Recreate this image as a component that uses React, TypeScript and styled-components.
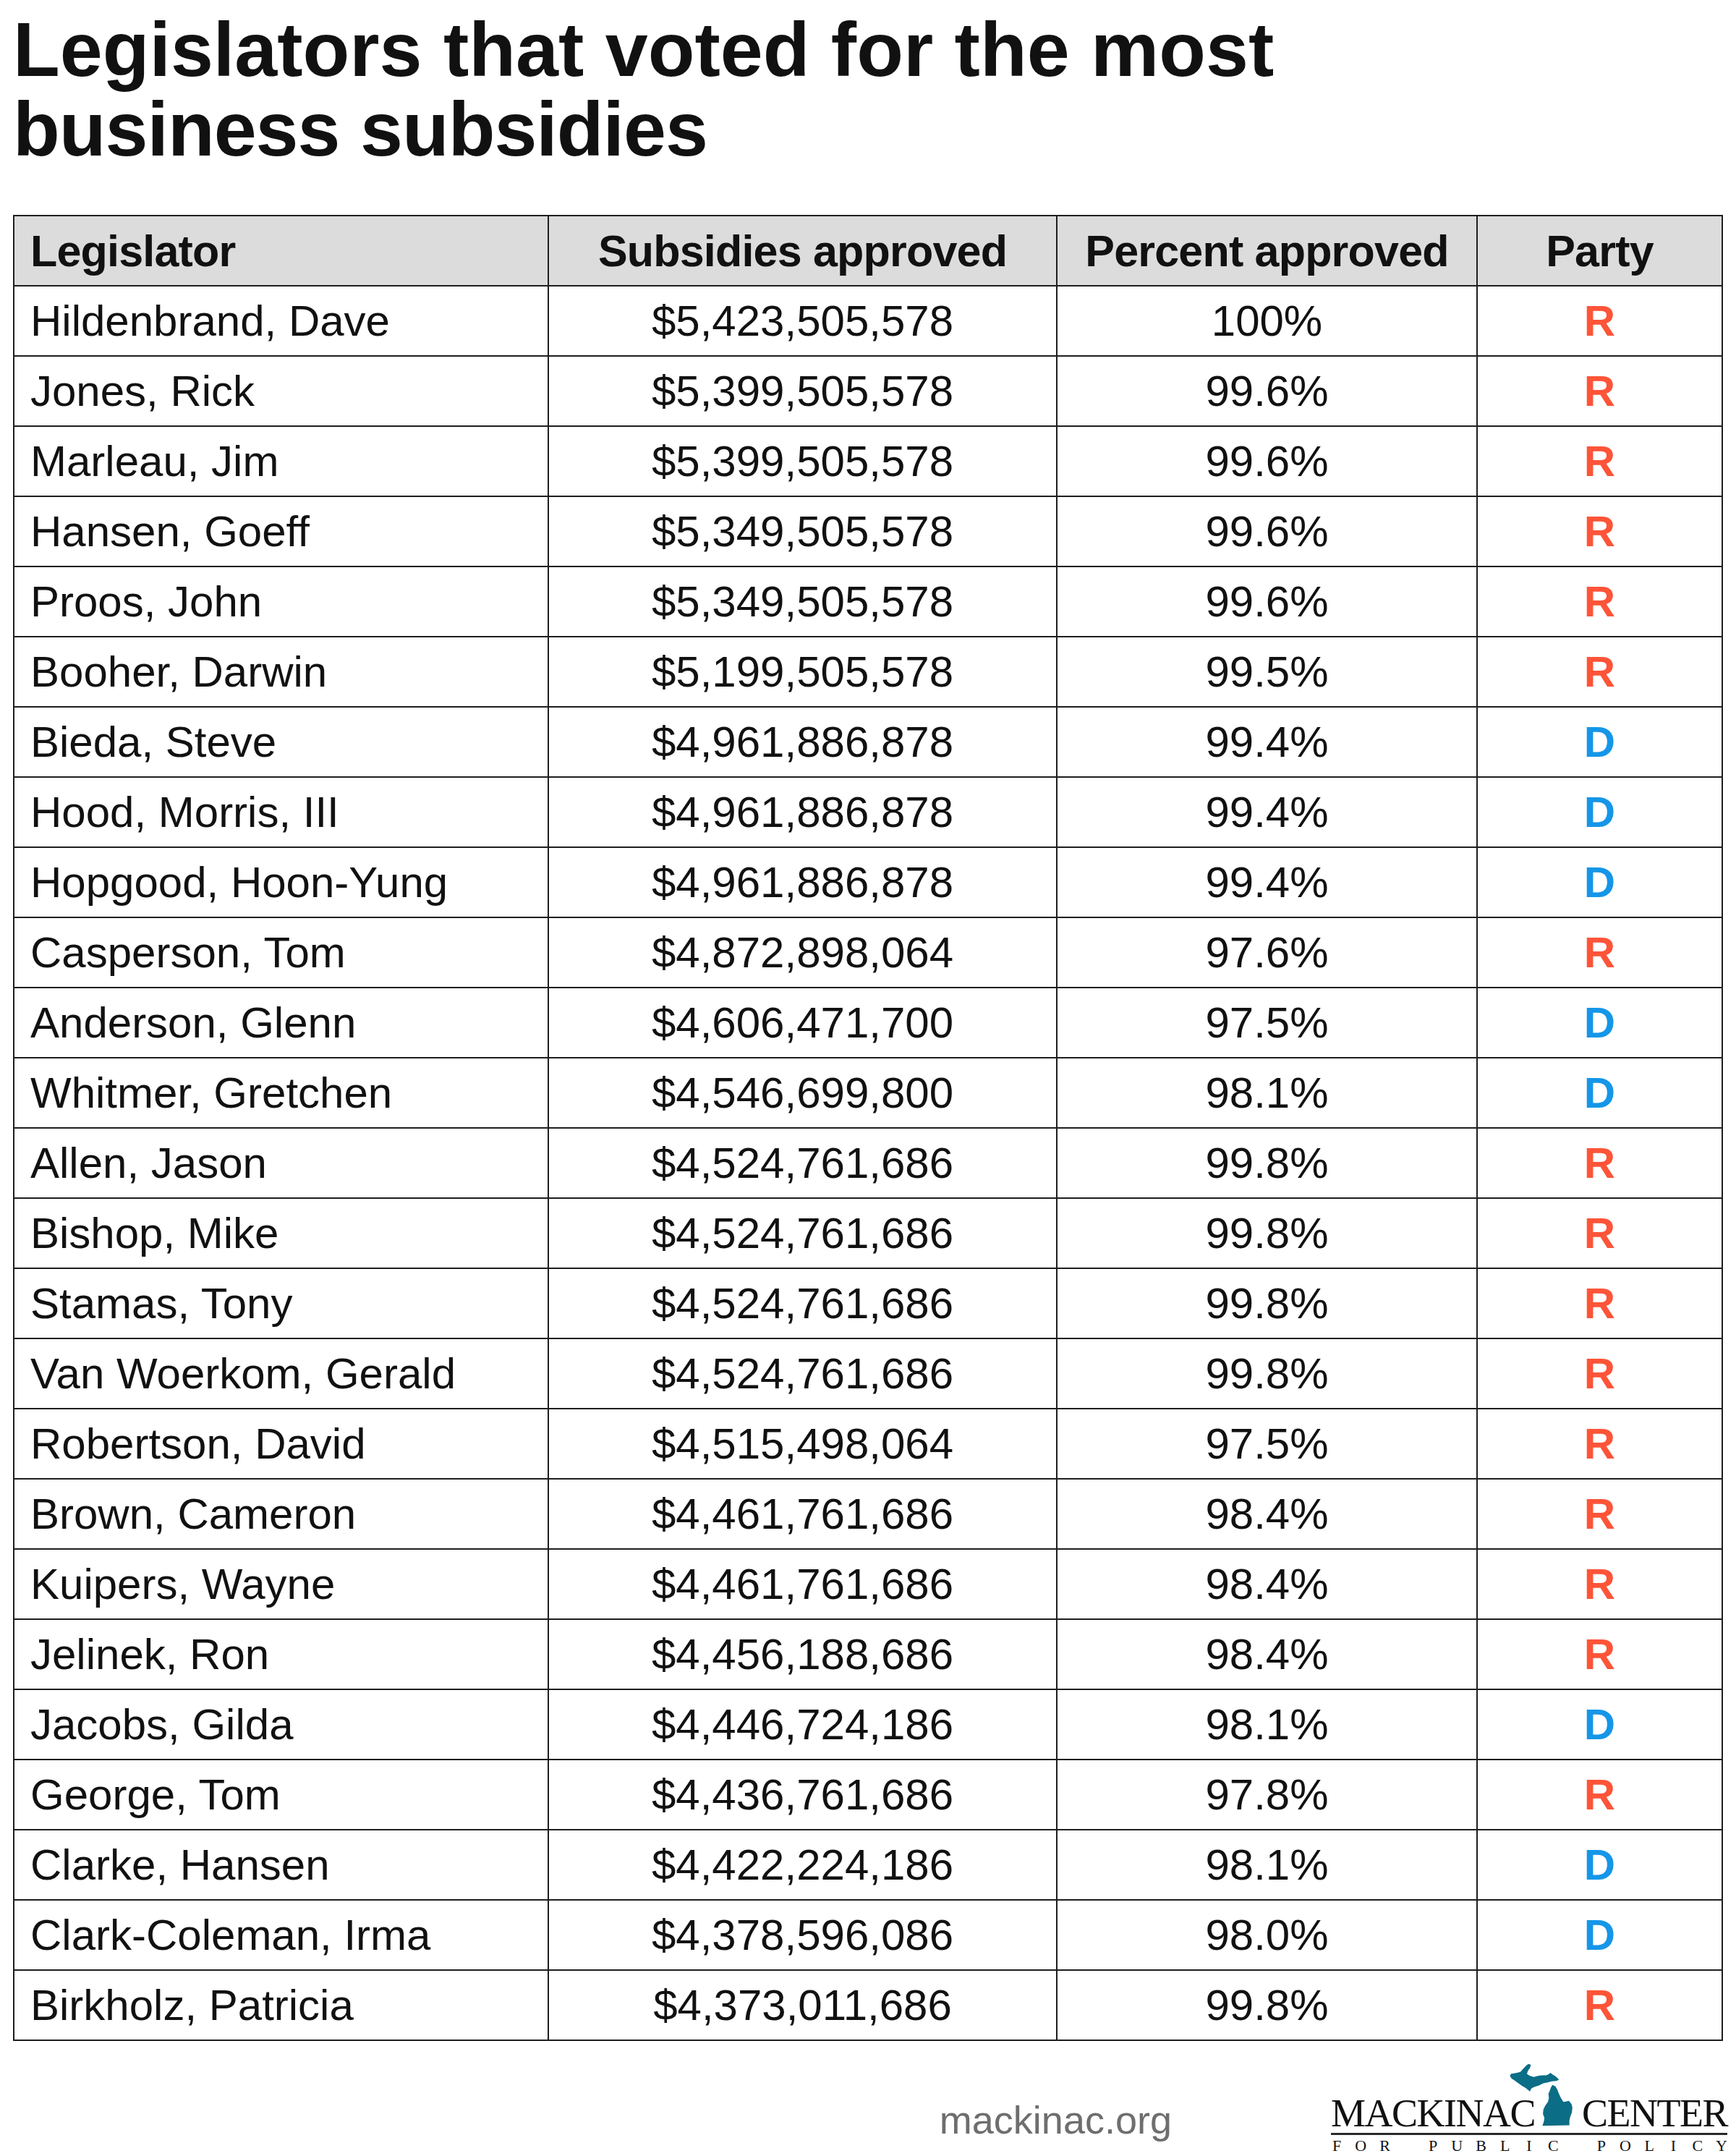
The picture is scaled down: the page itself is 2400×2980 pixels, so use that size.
import React from "react";
import styled, { createGlobalStyle } from "styled-components";

const GlobalStyle = createGlobalStyle`
  html, body { margin: 0; padding: 0; background: #ffffff; }
  body { font-family: "Liberation Sans", Arial, sans-serif; color: #111111; }
`;

const Page = styled.div`
  width: 2400px;
  box-sizing: border-box;
  padding: 13px 18px 0;
`;

const Title = styled.h1`
  margin: 0;
  font-family: "Liberation Sans", Arial, sans-serif;
  font-weight: 700;
  font-size: 106px;
  line-height: 110px;
  color: #111111;
`;

const TitleLine = styled.span<{ $tracking: number }>`
  display: block;
  letter-spacing: ${(p) => p.$tracking}px;
`;

const Grid = styled.div`
  margin-top: 64px;
  display: grid;
  grid-template-columns: 737px 701px 579px 337px;
  grid-auto-rows: 95px;
  gap: 2px;
  padding: 2px;
  background: #1e1e1e;
`;

type Align = "left" | "center";

const Cell = styled.div<{ $align: Align; $head?: boolean }>`
  display: flex;
  align-items: center;
  justify-content: ${(p) => (p.$align === "left" ? "flex-start" : "center")};
  padding: 0 22px;
  background: ${(p) => (p.$head ? "#dcdcdc" : "#ffffff")};
  font-size: ${(p) => (p.$head ? "61px" : "60px")};
  font-weight: ${(p) => (p.$head ? 700 : 400)};
  letter-spacing: ${(p) => (p.$head ? "-0.8px" : "0")};
  color: #111111;
  white-space: nowrap;
`;

const PartyMark = styled.span<{ $party: "R" | "D" }>`
  font-weight: 700;
  font-size: 60px;
  color: ${(p) => (p.$party === "R" ? "#fe5438" : "#1596e8")};
`;

const Footer = styled.div`
  margin-top: 31px;
  display: flex;
  justify-content: flex-end;
  align-items: flex-start;
`;

const Site = styled.div`
  margin-top: 51px;
  margin-right: 220px;
  font-family: "Liberation Sans", Arial, sans-serif;
  font-size: 54px;
  line-height: 1;
  color: #6e6e6e;
`;

const Logo = styled.div`
  width: 548px;
  margin-right: -6px;
  display: flex;
  flex-direction: column;
`;

const LogoTop = styled.div`
  display: flex;
  align-items: baseline;
`;

const LogoWord = styled.span<{ $push?: boolean }>`
  font-family: "Liberation Serif", "Times New Roman", serif;
  font-size: 54px;
  line-height: 1;
  letter-spacing: -1.5px;
  color: #111111;
  margin-left: ${(p) => (p.$push ? "auto" : "0")};
`;

const MichiganSvg = styled.svg`
  width: 90px;
  height: 87px;
  margin-left: -36px;
  flex: none;
`;

const Rule = styled.div`
  height: 3px;
  background: #2a2a2a;
`;

const Tagline = styled.div`
  margin-top: 4px;
  display: flex;
  justify-content: space-between;
  font-family: "Liberation Serif", "Times New Roman", serif;
  font-size: 22px;
  line-height: 22px;
  color: #111111;
`;

const TagLetter = styled.span`
  display: inline-block;
  width: 16px;
  text-align: center;
`;

type Row = [string, string, string, "R" | "D"];

const rows: Row[] = [
  ["Hildenbrand, Dave", "$5,423,505,578", "100%", "R"],
  ["Jones, Rick", "$5,399,505,578", "99.6%", "R"],
  ["Marleau, Jim", "$5,399,505,578", "99.6%", "R"],
  ["Hansen, Goeff", "$5,349,505,578", "99.6%", "R"],
  ["Proos, John", "$5,349,505,578", "99.6%", "R"],
  ["Booher, Darwin", "$5,199,505,578", "99.5%", "R"],
  ["Bieda, Steve", "$4,961,886,878", "99.4%", "D"],
  ["Hood, Morris, III", "$4,961,886,878", "99.4%", "D"],
  ["Hopgood, Hoon-Yung", "$4,961,886,878", "99.4%", "D"],
  ["Casperson, Tom", "$4,872,898,064", "97.6%", "R"],
  ["Anderson, Glenn", "$4,606,471,700", "97.5%", "D"],
  ["Whitmer, Gretchen", "$4,546,699,800", "98.1%", "D"],
  ["Allen, Jason", "$4,524,761,686", "99.8%", "R"],
  ["Bishop, Mike", "$4,524,761,686", "99.8%", "R"],
  ["Stamas, Tony", "$4,524,761,686", "99.8%", "R"],
  ["Van Woerkom, Gerald", "$4,524,761,686", "99.8%", "R"],
  ["Robertson, David", "$4,515,498,064", "97.5%", "R"],
  ["Brown, Cameron", "$4,461,761,686", "98.4%", "R"],
  ["Kuipers, Wayne", "$4,461,761,686", "98.4%", "R"],
  ["Jelinek, Ron", "$4,456,188,686", "98.4%", "R"],
  ["Jacobs, Gilda", "$4,446,724,186", "98.1%", "D"],
  ["George, Tom", "$4,436,761,686", "97.8%", "R"],
  ["Clarke, Hansen", "$4,422,224,186", "98.1%", "D"],
  ["Clark-Coleman, Irma", "$4,378,596,086", "98.0%", "D"],
  ["Birkholz, Patricia", "$4,373,011,686", "99.8%", "R"],
];

const tagline = "FOR PUBLIC POLICY".split("");

const Michigan = () => (
  <MichiganSvg viewBox="80 30 260 252" aria-hidden="true">
    <path
      fill="#0b6d86"
      d="M88,72 L112,68 L126,64 L138,50 L150,38 L158,32 L168,36 L164,48 L156,60 L152,72 L164,80 L180,84 L196,80 L212,78 L228,78 L238,74 L246,68 L254,74 L264,80 L274,88 L280,96 L270,100 L252,102 L236,106 L218,110 L200,118 L182,124 L170,130 L164,142 L156,136 L146,128 L132,120 L116,108 L102,98 L90,90 L84,80 Z"
    />
    <path
      fill="#0b6d86"
      d="M254,116 L266,122 L274,136 L280,152 L288,168 L298,184 L310,182 L320,180 L330,192 L334,206 L332,226 L326,242 L322,258 L322,278 L214,280 L220,262 L222,248 L216,232 L218,214 L226,198 L236,184 L240,168 L238,152 L244,138 L248,126 Z"
    />
  </MichiganSvg>
);

export default function App() {
  return (
    <>
      <GlobalStyle />
      <Page>
        <Title>
          <TitleLine $tracking={0}>Legislators that voted for the most</TitleLine>
          <TitleLine $tracking={-1}>business subsidies</TitleLine>
        </Title>
        <Grid>
          <Cell $head $align="left">Legislator</Cell>
          <Cell $head $align="center">Subsidies approved</Cell>
          <Cell $head $align="center">Percent approved</Cell>
          <Cell $head $align="center">Party</Cell>
          {rows.map(([name, amount, pct, party]) => (
            <React.Fragment key={name}>
              <Cell $align="left">{name}</Cell>
              <Cell $align="center">{amount}</Cell>
              <Cell $align="center">{pct}</Cell>
              <Cell $align="center">
                <PartyMark $party={party}>{party}</PartyMark>
              </Cell>
            </React.Fragment>
          ))}
        </Grid>
        <Footer>
          <Site>mackinac.org</Site>
          <Logo>
            <LogoTop>
              <LogoWord>MACKINAC</LogoWord>
              <Michigan />
              <LogoWord $push>CENTER</LogoWord>
            </LogoTop>
            <Rule />
            <Tagline>
              {tagline.map((ch, i) => (
                <TagLetter key={i}>{ch === " " ? "\u00a0" : ch}</TagLetter>
              ))}
            </Tagline>
          </Logo>
        </Footer>
      </Page>
    </>
  );
}
